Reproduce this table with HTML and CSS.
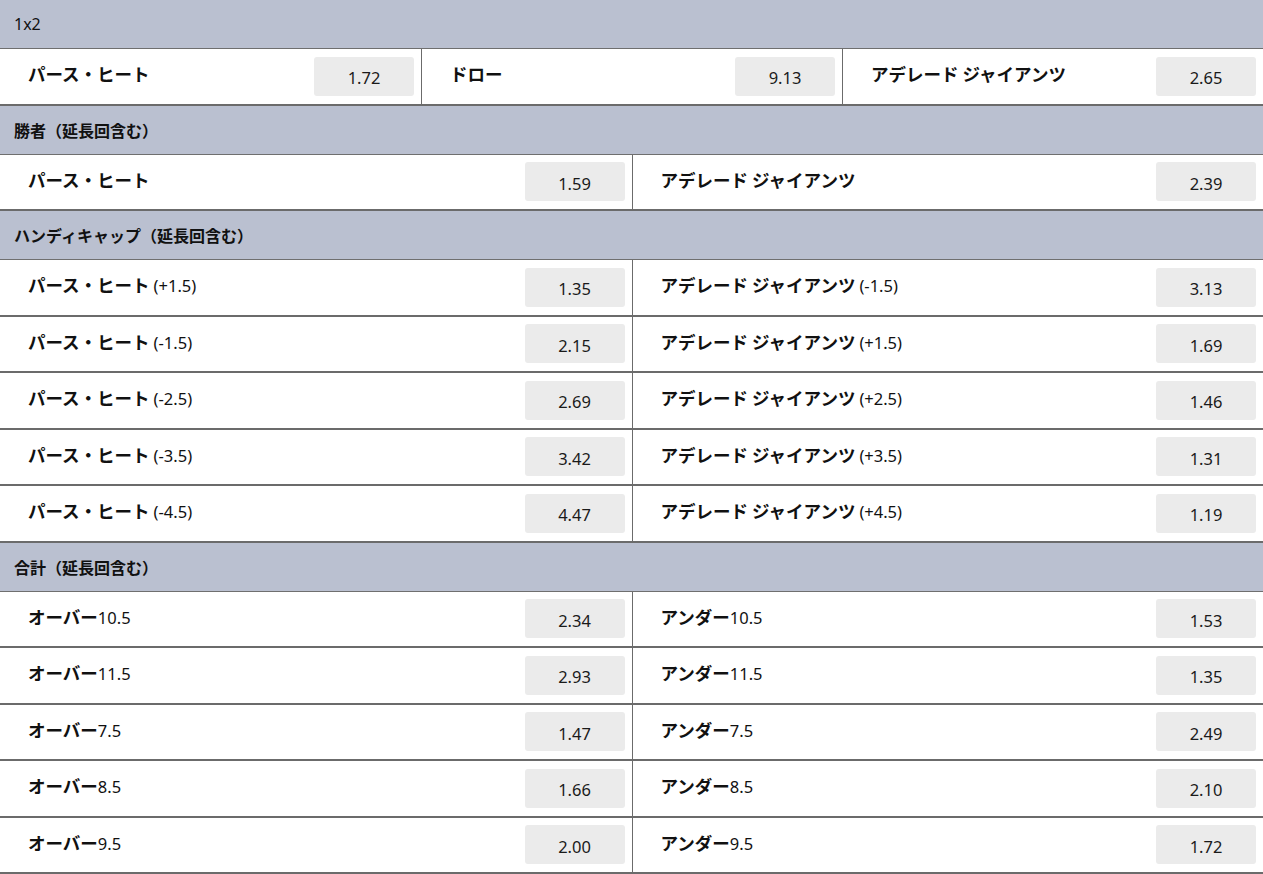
FILE: index.html
```html
<!DOCTYPE html>
<html lang="ja">
<head>
<meta charset="utf-8">
<title>Markets</title>
<link rel="stylesheet" href="styles.css">
</head>
<body>
<div class="markets">
  <section class="market">
    <div class="market-head light">1x2</div>
    <div class="row cols-3">
      <div class="cell"><span class="label">パース・ヒート</span><button class="odd">1.72</button></div>
      <div class="cell"><span class="label">ドロー</span><button class="odd">9.13</button></div>
      <div class="cell"><span class="label">アデレード ジャイアンツ</span><button class="odd">2.65</button></div>
    </div>
  </section>

  <section class="market">
    <div class="market-head">勝者（延長回含む）</div>
    <div class="row cols-2">
      <div class="cell"><span class="label">パース・ヒート</span><button class="odd">1.59</button></div>
      <div class="cell"><span class="label">アデレード ジャイアンツ</span><button class="odd">2.39</button></div>
    </div>
  </section>

  <section class="market">
    <div class="market-head">ハンディキャップ（延長回含む）</div>
    <div class="row cols-2">
      <div class="cell"><span class="label">パース・ヒート <span class="line">(+1.5)</span></span><button class="odd">1.35</button></div>
      <div class="cell"><span class="label">アデレード ジャイアンツ <span class="line">(-1.5)</span></span><button class="odd">3.13</button></div>
    </div>
    <div class="row cols-2">
      <div class="cell"><span class="label">パース・ヒート <span class="line">(-1.5)</span></span><button class="odd">2.15</button></div>
      <div class="cell"><span class="label">アデレード ジャイアンツ <span class="line">(+1.5)</span></span><button class="odd">1.69</button></div>
    </div>
    <div class="row cols-2">
      <div class="cell"><span class="label">パース・ヒート <span class="line">(-2.5)</span></span><button class="odd">2.69</button></div>
      <div class="cell"><span class="label">アデレード ジャイアンツ <span class="line">(+2.5)</span></span><button class="odd">1.46</button></div>
    </div>
    <div class="row cols-2">
      <div class="cell"><span class="label">パース・ヒート <span class="line">(-3.5)</span></span><button class="odd">3.42</button></div>
      <div class="cell"><span class="label">アデレード ジャイアンツ <span class="line">(+3.5)</span></span><button class="odd">1.31</button></div>
    </div>
    <div class="row cols-2">
      <div class="cell"><span class="label">パース・ヒート <span class="line">(-4.5)</span></span><button class="odd">4.47</button></div>
      <div class="cell"><span class="label">アデレード ジャイアンツ <span class="line">(+4.5)</span></span><button class="odd">1.19</button></div>
    </div>
  </section>

  <section class="market">
    <div class="market-head">合計（延長回含む）</div>
    <div class="row cols-2">
      <div class="cell"><span class="label">オーバー<span class="line">10.5</span></span><button class="odd">2.34</button></div>
      <div class="cell"><span class="label">アンダー<span class="line">10.5</span></span><button class="odd">1.53</button></div>
    </div>
    <div class="row cols-2">
      <div class="cell"><span class="label">オーバー<span class="line">11.5</span></span><button class="odd">2.93</button></div>
      <div class="cell"><span class="label">アンダー<span class="line">11.5</span></span><button class="odd">1.35</button></div>
    </div>
    <div class="row cols-2">
      <div class="cell"><span class="label">オーバー<span class="line">7.5</span></span><button class="odd">1.47</button></div>
      <div class="cell"><span class="label">アンダー<span class="line">7.5</span></span><button class="odd">2.49</button></div>
    </div>
    <div class="row cols-2">
      <div class="cell"><span class="label">オーバー<span class="line">8.5</span></span><button class="odd">1.66</button></div>
      <div class="cell"><span class="label">アンダー<span class="line">8.5</span></span><button class="odd">2.10</button></div>
    </div>
    <div class="row cols-2">
      <div class="cell"><span class="label">オーバー<span class="line">9.5</span></span><button class="odd">2.00</button></div>
      <div class="cell"><span class="label">アンダー<span class="line">9.5</span></span><button class="odd">1.72</button></div>
    </div>
  </section>
</div>
</body>
</html>
```

FILE: styles.css
```css
html, body {
  margin: 0;
  padding: 0;
  background: #ffffff;
}

body {
  font-family: "Noto Sans", "Noto Sans CJK JP", sans-serif;
  color: #111111;
}

.markets {
  display: flex;
  flex-direction: column;
  width: 100%;
}

.market {
  display: flex;
  flex-direction: column;
}

.market-head {
  box-sizing: border-box;
  height: 49px;
  display: flex;
  align-items: center;
  padding: 0 14px;
  background: #bac0d0;
  border-bottom: 1px solid #6f6f6f;
  font-family: "Noto Sans CJK JP", sans-serif;
  font-size: 16px;
  font-weight: 700;
  color: #111111;
}

.market-head.light {
  font-family: "Noto Sans", "Noto Sans CJK JP", sans-serif;
  font-weight: 400;
  font-size: 16px;
}

.row {
  box-sizing: border-box;
  height: 56.5px;
  display: grid;
  border-bottom: 2px solid #6b6b6b;
}

.cols-3 {
  grid-template-columns: 1fr 1fr 1fr;
}

.cols-2 {
  grid-template-columns: 1fr 1fr;
}

.cell {
  display: flex;
  align-items: center;
  justify-content: space-between;
  padding: 0 7px 0 28px;
  min-width: 0;
}

.cell + .cell {
  border-left: 1px solid #6b6b6b;
}

.label {
  font-family: "Noto Sans CJK JP", sans-serif;
  font-size: 17.5px;
  font-weight: 700;
  color: #111111;
  padding-bottom: 5px;
  white-space: nowrap;
}

.line {
  font-family: "Noto Sans", sans-serif;
  font-size: 16.5px;
  font-weight: 400;
}

.odd {
  width: 100px;
  height: 39px;
  border: none;
  border-radius: 3px;
  background: #ebebeb;
  font-family: "Noto Sans", sans-serif;
  font-size: 16.5px;
  color: #1a1a1a;
  padding: 3px 0 0;
  cursor: pointer;
}
```
